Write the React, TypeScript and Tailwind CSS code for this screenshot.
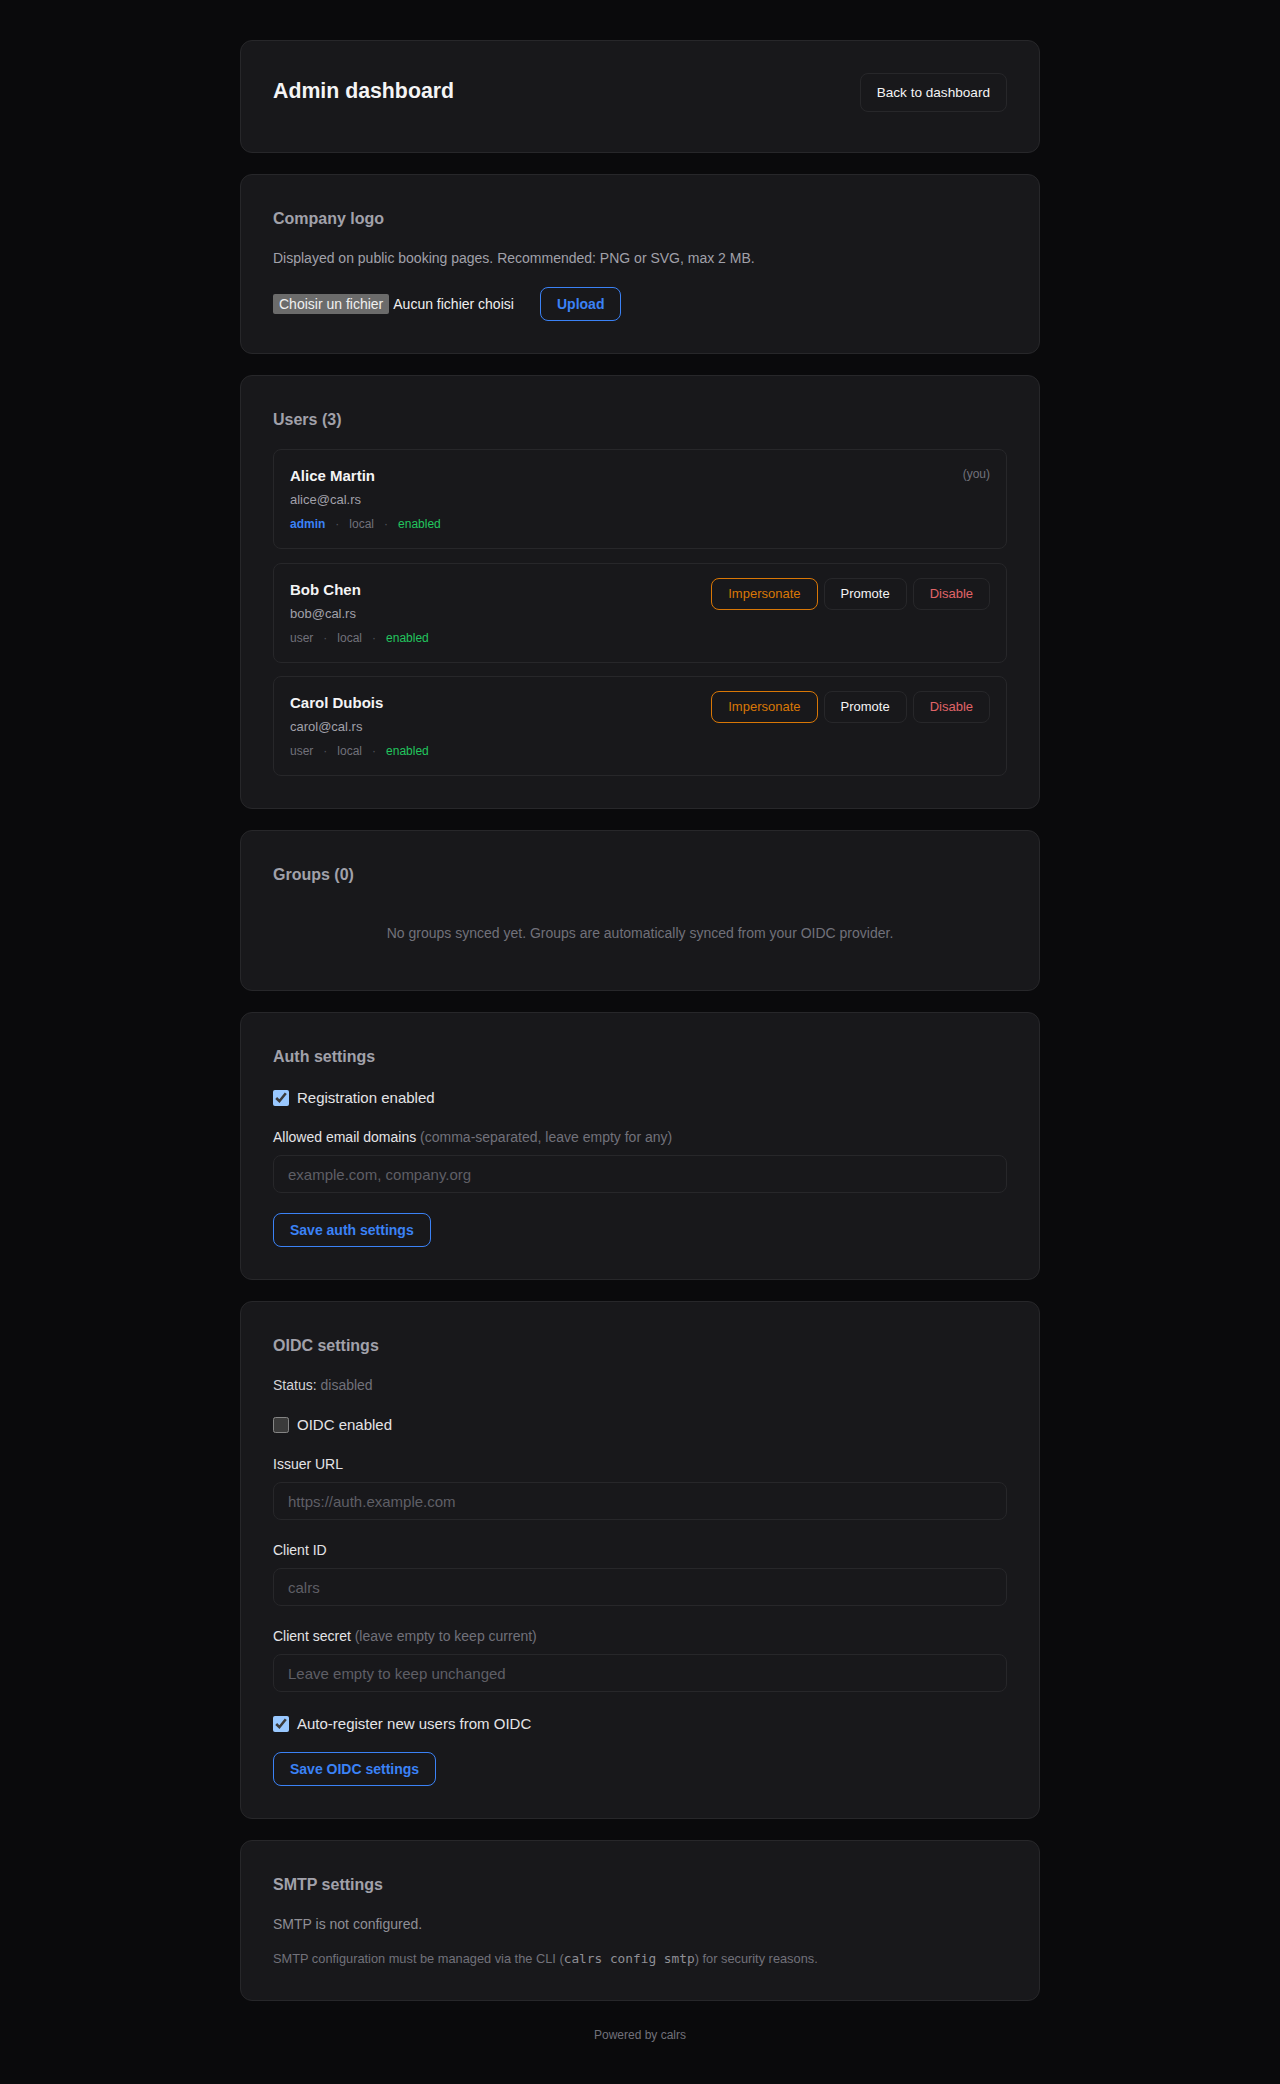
import React from "react";

function Card({ children, className = "" }: { children: React.ReactNode; className?: string }) {
  return (
    <section className={`rounded-xl border border-[#27272a] bg-[#18181b] p-8 ${className}`}>
      {children}
    </section>
  );
}

function Heading({ children }: { children: React.ReactNode }) {
  return <h2 className="text-base leading-6 font-bold text-[#a1a1aa] mb-[17px]">{children}</h2>;
}

function Dot() {
  return <span className="mx-[10px] text-[#52525b]">·</span>;
}

type User = { name: string; email: string; role: string; you?: boolean };

const users: User[] = [
  { name: "Alice Martin", email: "alice@cal.rs", role: "admin", you: true },
  { name: "Bob Chen", email: "bob@cal.rs", role: "user" },
  { name: "Carol Dubois", email: "carol@cal.rs", role: "user" },
];

function UserRow({ u }: { u: User }) {
  return (
    <div className="rounded-lg border border-[#27272a] bg-[#18181b] p-4 flex justify-between items-start">
      <div>
        <div className="text-[15px] leading-5 font-bold text-[#f4f4f5]">{u.name}</div>
        <div className="text-[13px] leading-5 mt-1 text-[#a1a1aa]">{u.email}</div>
        <div className="text-xs leading-4 mt-1.5">
          {u.role === "admin" ? (
            <span className="font-bold text-[#3b82f6]">admin</span>
          ) : (
            <span className="text-[#71717a]">user</span>
          )}
          <Dot />
          <span className="text-[#71717a]">local</span>
          <Dot />
          <span className="text-[#22c55e]">enabled</span>
        </div>
      </div>
      {u.you ? (
        <span className="text-xs leading-4 text-[#71717a]">(you)</span>
      ) : (
        <div className="flex gap-1.5 -mt-0.5">
          <button className="h-8 px-4 rounded-lg border border-[#d97706] text-[13px] text-[#d97706] bg-transparent">
            Impersonate
          </button>
          <button className="h-8 px-4 rounded-lg border border-[#27272a] text-[13px] text-[#f4f4f5] bg-transparent">
            Promote
          </button>
          <button className="h-8 px-4 rounded-lg border border-[#27272a] text-[13px] text-[#e06468] bg-transparent">
            Disable
          </button>
        </div>
      )}
    </div>
  );
}

function Checkbox({ label, checked }: { label: string; checked?: boolean }) {
  return (
    <label className="flex items-center gap-2 text-[15px] leading-6 text-[#e4e4e7]">
      <input type="checkbox" defaultChecked={checked} className="w-4 h-4 m-0" />
      {label}
    </label>
  );
}

function Field({ label, hint, placeholder, className = "" }: { label: string; hint?: string; placeholder: string; className?: string }) {
  return (
    <div className={className}>
      <div className="text-sm leading-5 text-[#e4e4e7] mb-2">
        {label}
        {hint && <span className="text-[#71717a]"> {hint}</span>}
      </div>
      <input
        type="text"
        placeholder={placeholder}
        className="block w-full h-[38px] rounded-lg border border-[#27272a] bg-[#18181b] px-3.5 text-[15px] text-[#e4e4e7] placeholder:text-[#5f5f66] outline-none"
      />
    </div>
  );
}

function OutlineBlue({ children }: { children: React.ReactNode }) {
  return (
    <button className="h-[34px] px-4 rounded-lg border border-[#3b82f6] text-sm font-bold text-[#3b82f6] bg-transparent">
      {children}
    </button>
  );
}

export default function App() {
  return (
    <div
      className="min-h-screen bg-[#0a0a0c] [color-scheme:dark]"
      style={{ fontFamily: '"Liberation Sans", Arial, sans-serif' }}
    >
      <div className="mx-auto w-[800px] pt-10 pb-10 flex flex-col gap-[21px]">
        <Card>
          <div className="flex justify-between items-start">
            <h1 className="text-[21.3px] leading-7 font-bold text-[#f4f4f5] mt-1 mb-[15px]">Admin dashboard</h1>
            <button className="px-4 py-2.5 leading-[17px] text-[13.6px] rounded-lg border border-[#27272a] text-[#f4f4f5] bg-transparent">
              Back to dashboard
            </button>
          </div>
        </Card>

        <Card>
          <Heading>Company logo</Heading>
          <p className="text-sm leading-5 text-[#a1a1aa] mb-[19px]">
            Displayed on public booking pages. Recommended: PNG or SVG, max 2 MB.
          </p>
          <div className="flex items-center gap-3">
            <div className="w-[255px] flex items-center text-sm">
              <span className="h-5 leading-5 px-1.5 rounded-[2px] bg-[#6b6b6b] text-[#f0f0f0]">Choisir un fichier</span>
              <span className="ml-1 text-[#f0f0f0]">Aucun fichier choisi</span>
            </div>
            <OutlineBlue>Upload</OutlineBlue>
          </div>
        </Card>

        <Card>
          <Heading>Users (3)</Heading>
          <div className="flex flex-col gap-[13.5px]">
            {users.map((u) => (
              <UserRow key={u.email} u={u} />
            ))}
          </div>
        </Card>

        <Card>
          <Heading>Groups (0)</Heading>
          <p className="text-sm leading-5 text-[#71717a] text-center pt-[19px] pb-[15px]">
            No groups synced yet. Groups are automatically synced from your OIDC provider.
          </p>
        </Card>

        <Card>
          <Heading>Auth settings</Heading>
          <div className="mb-[17px]">
            <Checkbox label="Registration enabled" checked />
          </div>
          <Field
            label="Allowed email domains"
            hint="(comma-separated, leave empty for any)"
            placeholder="example.com, company.org"
            className="mb-5"
          />
          <OutlineBlue>Save auth settings</OutlineBlue>
        </Card>

        <Card>
          <Heading>OIDC settings</Heading>
          <p className="text-sm leading-5 mb-[18px]">
            <span className="text-[#d4d4d8]">Status:</span> <span className="text-[#71717a]">disabled</span>
          </p>
          <div className="mb-[17px]">
            <Checkbox label="OIDC enabled" />
          </div>
          <Field label="Issuer URL" placeholder="https://auth.example.com" className="mb-5" />
          <Field label="Client ID" placeholder="calrs" className="mb-5" />
          <Field
            label="Client secret"
            hint="(leave empty to keep current)"
            placeholder="Leave empty to keep unchanged"
            className="mb-5"
          />
          <div className="mb-4">
            <Checkbox label="Auto-register new users from OIDC" checked />
          </div>
          <OutlineBlue>Save OIDC settings</OutlineBlue>
        </Card>

        <Card>
          <Heading>SMTP settings</Heading>
          <p className="text-sm leading-5 text-[#8f8f96] mt-0.5 mb-4">SMTP is not configured.</p>
          <p className="text-[12.8px] leading-[18px] text-[#71717a]">
            SMTP configuration must be managed via the CLI (
            <code className="text-[12.8px] text-[#8f8f96]" style={{ fontFamily: '"DejaVu Sans Mono", "Liberation Mono", monospace' }}>
              calrs config smtp
            </code>
            ) for security reasons.
          </p>
        </Card>

        <footer className="mt-[5px] text-center text-xs leading-4 text-[#71717a]">Powered by calrs</footer>
      </div>
    </div>
  );
}
